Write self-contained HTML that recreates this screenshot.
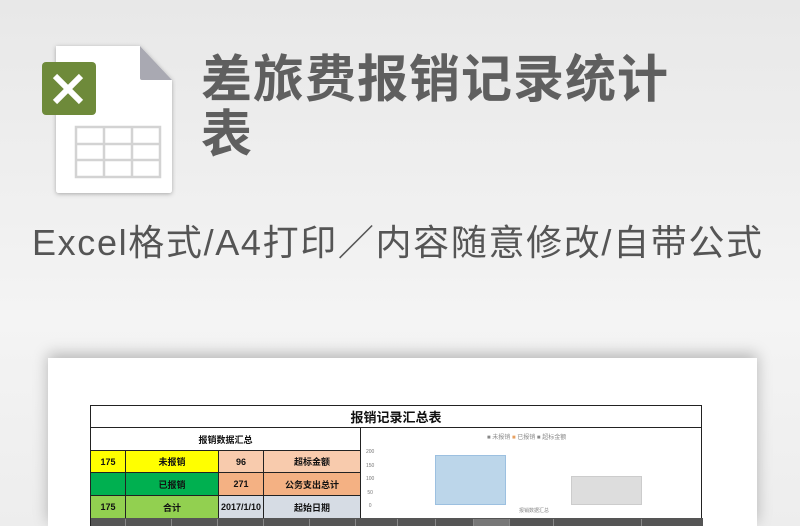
<!DOCTYPE html>
<html style="height:526px;overflow:hidden"><head><meta charset="utf-8"><style>
body{margin:0;width:800px;height:526px;overflow:hidden;position:relative;background:linear-gradient(#e8e8e8,#f4f4f4 60%,#ededed);font-family:"Liberation Sans","Noto Sans CJK SC",sans-serif}
.t{position:absolute;left:201px;top:52px;font-size:51px;font-weight:bold;color:#5f5f5f;line-height:55px;width:490px;letter-spacing:1px}
.s{position:absolute;left:32px;top:214px;font-size:36px;color:#555;white-space:nowrap;letter-spacing:1.65px}
.paper{position:absolute;left:48px;top:358px;width:709px;height:168px;background:#fff;box-shadow:0 -4px 14px rgba(0,0,0,.25)}
.c{position:absolute;box-sizing:border-box;border:1px solid #222;font-size:9px;font-weight:bold;display:flex;align-items:center;justify-content:center;color:#111}
.d{position:absolute;top:519px;height:7px;border-right:1px solid #888;box-sizing:border-box}
</style></head><body>
<svg style="position:absolute;left:36px;top:40px" width="140" height="160" viewBox="0 0 140 160">
<defs><filter id="f"><feDropShadow dx="0" dy="1" stdDeviation="2" flood-opacity=".3"/></filter></defs>
<path d="M20 6 H104 L136 40 V150 Q136 153 133 153 H23 Q20 153 20 150Z" fill="#fff" filter="url(#f)"/>
<path d="M104 6 L136 40 H106 Q104 40 104 38Z" fill="#a9a9b2"/>
<g fill="none" stroke="#d3d3d3" stroke-width="2.5"><rect x="40" y="87" width="84" height="50"/><path d="M40 104H124M40 120H124M68 87V137M96 87V137"/></g>
<rect x="6" y="22" width="54" height="53" rx="4" fill="#6e8a3a"/>
<path d="M19 36 L45 62 M45 36 L19 62" stroke="#fff" stroke-width="6"/>
</svg>
<div class="t">差旅费报销记录统计<br>表</div>
<div class="s">Excel格式/A4打印／内容随意修改/自带公式</div>
<div class="paper"></div>
<div class="c" style="left:90px;top:405px;width:612px;height:23px;font-size:13px;background:#fff">报销记录汇总表</div>
<div class="c" style="left:90px;top:427px;width:271px;height:24px;background:#fff">报销数据汇总</div>
<div class="c" style="left:90px;top:450px;width:36px;height:23px;background:#ffff00">175</div>
<div class="c" style="left:125px;top:450px;width:94px;height:23px;background:#ffff00">未报销</div>
<div class="c" style="left:218px;top:450px;width:46px;height:23px;background:#f8cbad">96</div>
<div class="c" style="left:263px;top:450px;width:98px;height:23px;background:#f8cbad">超标金额</div>
<div class="c" style="left:90px;top:472px;width:36px;height:24px;background:#00b050"></div>
<div class="c" style="left:125px;top:472px;width:94px;height:24px;background:#00b050">已报销</div>
<div class="c" style="left:218px;top:472px;width:46px;height:24px;background:#f4b183">271</div>
<div class="c" style="left:263px;top:472px;width:98px;height:24px;background:#f4b183">公务支出总计</div>
<div class="c" style="left:90px;top:495px;width:36px;height:24px;background:#92d050">175</div>
<div class="c" style="left:125px;top:495px;width:94px;height:24px;background:#92d050">合计</div>
<div class="c" style="left:218px;top:495px;width:46px;height:24px;background:#d6dce4">2017/1/10</div>
<div class="c" style="left:263px;top:495px;width:98px;height:24px;background:#d6dce4">起始日期</div>
<div style="position:absolute;left:361px;top:428px;width:340px;height:90px;background:#fff;border-right:1px solid #222"></div>
<div style="position:absolute;left:487px;top:432px;font-size:6px;color:#888">■ 未报销 <span style="color:#e8a060">■</span> 已报销 ■ 超标金额</div>
<div style="position:absolute;left:366px;top:446px;font-size:5px;color:#777;line-height:13.5px">200<br>150<br>100<br>&nbsp;50<br>&nbsp;&nbsp;0</div>
<div style="position:absolute;left:435px;top:455px;width:69px;height:48px;background:#bcd6ea;border:1px solid #9cc0e0"></div>
<div style="position:absolute;left:571px;top:476px;width:69px;height:27px;background:#ddd;border:1px solid #ccc"></div>
<div style="position:absolute;left:519px;top:507px;font-size:5px;color:#888">报销数据汇总</div>
<div style="position:absolute;left:90px;top:518px;width:612px;height:8px;background:#555;border-left:1px solid #222"></div>
<div class="d" style="left:90px;width:36px"></div><div class="d" style="left:126px;width:46px"></div><div class="d" style="left:172px;width:46px"></div><div class="d" style="left:218px;width:46px"></div><div class="d" style="left:264px;width:46px"></div><div class="d" style="left:310px;width:46px"></div><div class="d" style="left:356px;width:42px"></div><div class="d" style="left:398px;width:38px"></div><div class="d" style="left:436px;width:38px"></div><div class="d" style="left:474px;width:36px;background:#777"></div><div class="d" style="left:510px;width:44px"></div><div class="d" style="left:554px;width:88px"></div>
</body></html>
